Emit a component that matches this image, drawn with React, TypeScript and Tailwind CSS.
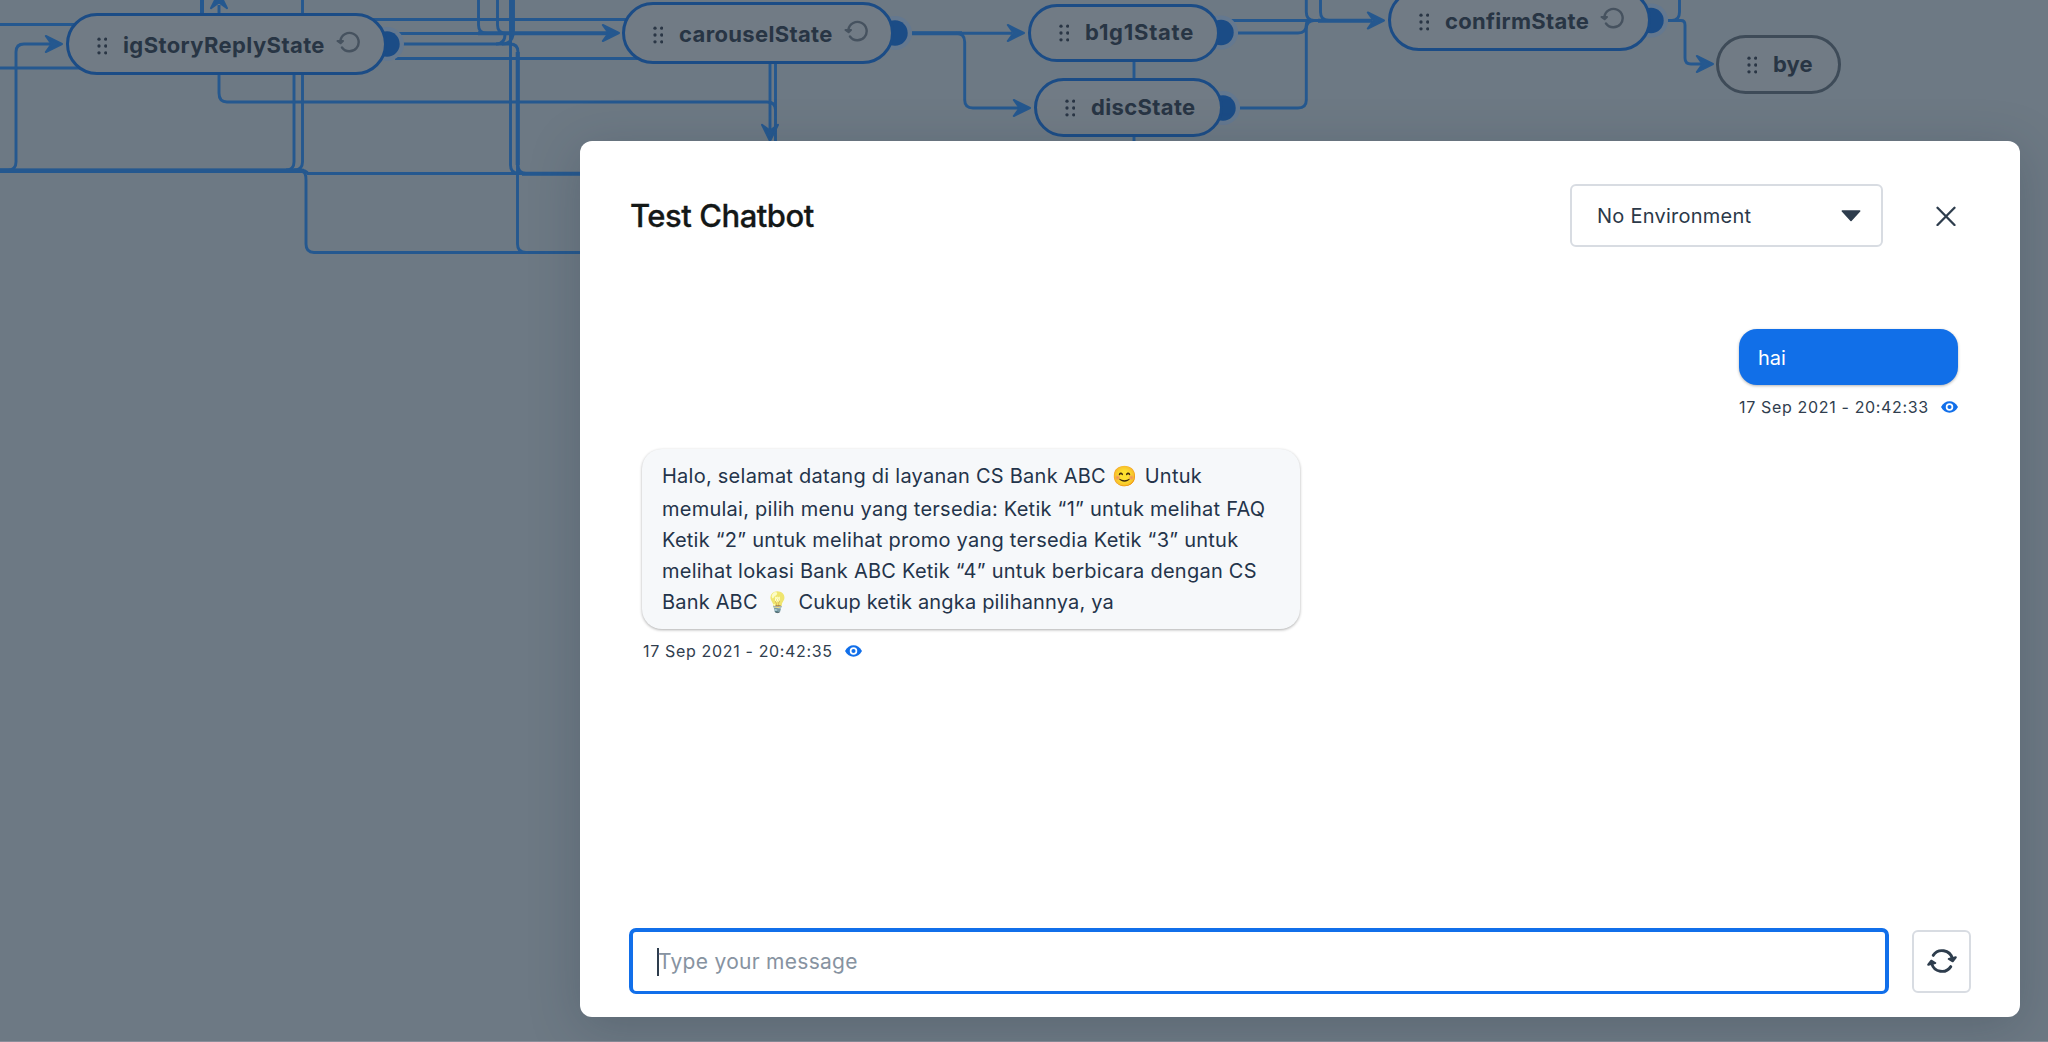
import type { ReactNode } from 'react';

const EDGES = [
  'M0 24.5H80',
  'M0 68H90',
  'M0 170H8Q16 170 16 162V52Q16 44 24 44H52',
  'M0 171.5H302Q306 171.5 306 180V244Q306 252.5 314 252.5H590',
  'M0 170H298Q306 170 308 173.5H590',
  'M219 5V93Q219 102 227 102H767Q775.5 102 775.5 110V150',
  'M302.5 0V162Q302.5 170 294 170',
  'M294 60V162Q294 170 286 170',
  'M370 19.5H640',
  'M395 33.5H608',
  'M403 44H510Q518 44 518 52V165Q518 173.5 526 173.5',
  'M395 58.5H650',
  'M478.5 0V25Q478.5 33.5 487 33.5',
  'M497.5 0V25Q497.5 33.5 506 33.5',
  'M496 44Q505 44 505 34',
  'M510.5 0V165Q510.5 173.5 519 173.5',
  'M502 44Q513.5 44 513.5 30V0',
  'M517.5 60V244Q517.5 252.5 526 252.5',
  'M770 50V130',
  'M775.5 50V110',
  'M912 33.3H1012',
  'M956 33.3Q964.7 33.3 964.7 42V100Q964.7 108 973 108H1020',
  'M1134 50V150',
  'M1225 20.5H1372',
  'M1238 33H1298Q1306.3 33 1306.3 25Q1306.3 20.5 1312 20.5',
  'M1240 108H1298Q1306.3 108 1306.3 100V29Q1306.3 20.5 1314 20.5',
  'M1306.3 0V12Q1306.3 20.5 1314 20.5',
  'M1320.5 0V12Q1320.5 20.5 1329 20.5',
  'M1668 20.5H1672Q1679.5 20.5 1679.5 12V0',
  'M1668 20.5H1681Q1685 20.5 1685 25V58Q1685 64 1691 64H1702',
];

const THICK_EDGES = [
  'M0 170.7H304',
  'M202 0V30',
  'M512 0V36',
  'M517.7 52V165',
  'M478 33.2H608',
  'M912 33.2H962',
  'M522 173.7H590',
  'M1318 20.7H1372',
];

const ARROWS: [number, number, number][] = [
  [63, 44, 0],
  [620, 33, 0],
  [1025, 33, 0],
  [1031, 108, 0],
  [1385, 20.5, 0],
  [1714, 64, 0],
  [219, -9, -90],
  [770, 142, 90],
];

const PORTS: [number, number][] = [
  [387, 44],
  [895, 33],
  [1221, 32.5],
  [1223, 108],
  [1651, 20.5],
];

function Edges() {
  return (
    <svg className="absolute inset-0" width="2048" height="1042" fill="none">
      <g stroke="#25588f" strokeWidth="2.9">
        {EDGES.map((d) => (
          <path key={d} d={d} />
        ))}
      </g>
      <g stroke="#25588f" strokeWidth="4">
        {THICK_EDGES.map((d) => (
          <path key={d} d={d} />
        ))}
      </g>
      {ARROWS.map(([x, y, r]) => (
        <path
          key={`${x}-${y}`}
          d="M-1 0L-17.2 -8L-11.5 0L-17.2 8Z"
          fill="#25588f"
          stroke="#25588f"
          strokeWidth="2"
          strokeLinejoin="round"
          transform={`translate(${x} ${y}) rotate(${r})`}
        />
      ))}
      {PORTS.map(([x, y]) => (
        <g key={`${x}-${y}`}>
          <circle cx={x} cy={y} r="17" fill="#64788f" />
          <circle cx={x} cy={y} r="12.7" fill="#1b4c86" />
        </g>
      ))}
    </svg>
  );
}

function Grip() {
  return (
    <svg width="10" height="18" viewBox="0 0 10 18" fill="#2a3645" className="shrink-0">
      {[2, 8.7].map((x) => [2.2, 9, 15.8].map((y) => <circle key={`${x}${y}`} cx={x} cy={y} r="1.65" />))}
    </svg>
  );
}

function Reload() {
  return (
    <svg width="24" height="22" viewBox="0 0 24 22" fill="none" className="shrink-0">
      <path d="M6 16.500A9.200 9.200 0 1 0 4.400 9.500" stroke="#46525f" strokeWidth="2.400" strokeLinecap="round" />
      <path d="M1.500 10L4.600 12.300L7 10Z" fill="#46525f" stroke="#46525f" strokeWidth="2" strokeLinecap="round" strokeLinejoin="round" />
    </svg>
  );
}

function Node({ place, label, loop = false, border = 'border-[#1b4c86]', text = 'tracking-[0.4px]' }: {
  place: string;
  label: string;
  loop?: boolean;
  border?: string;
  text?: string;
}) {
  return (
    <div className={`absolute flex items-center rounded-full border-[3px] bg-[#717b85] pl-[28px] ${border} ${place}`}>
      <span className={loop ? 'translate-y-[2px]' : ''}>
        <Grip />
      </span>
      <span className={`ml-[16px] whitespace-nowrap text-[22px] font-bold leading-[30px] text-[#283544] ${text} ${loop ? 'pt-[2px]' : 'pb-[2px]'}`}>
        {label}
      </span>
      {loop && (
        <span className="ml-[11px] -translate-y-[2px]">
          <Reload />
        </span>
      )}
    </div>
  );
}

function Eye() {
  return (
    <svg width="17" height="12" viewBox="0 0 17 12" className="shrink-0">
      <path d="M0 6C2 2.300 5 .3 8.500 .3S15 2.300 17 6C15 9.700 12 11.700 8.500 11.700S2 9.700 0 6Z" fill="#116fea" />
      <circle cx="8.500" cy="6" r="2.900" fill="#116fea" stroke="#fff" strokeWidth="1.700" />
    </svg>
  );
}

function Stamp({ children }: { children: ReactNode }) {
  return (
    <div className="flex items-center gap-[12px] text-[16px] leading-[22px] tracking-[0.66px] text-[#303e4e]">
      <span className="whitespace-nowrap">{children}</span>
      <Eye />
    </div>
  );
}

export default function App() {
  return (
    <div className="relative h-[1042px] w-[2048px] overflow-hidden bg-[#6d7984] font-['Inter','Liberation_Sans',sans-serif]">
      <Edges />
      <Node place="left-[66px] top-[13px] h-[62px] w-[321px]" label="igStoryReplyState" loop />
      <Node place="left-[622px] top-[2px] h-[62px] w-[272px]" label="carouselState" loop text="tracking-[0.35px]" />
      <Node place="left-[1028px] top-[4px] h-[58px] w-[192px]" label="b1g1State" text="tracking-[0.75px]" />
      <Node place="left-[1034px] top-[78px] h-[59px] w-[189px]" label="discState" text="tracking-[0.35px]" />
      <Node place="left-[1388px] top-[-11px] h-[62px] w-[263px]" label="confirmState" loop text="tracking-[0.3px]" />
      <Node place="left-[1716px] top-[35px] h-[59px] w-[125px]" label="bye" border="border-[#3e4b58]" text="tracking-[0.1px]" />
      <div className="absolute inset-x-0 bottom-0 h-px bg-[#8b8e9b]" />

      <section className="absolute left-[580px] top-[141px] flex h-[876px] w-[1440px] flex-col rounded-[12px] bg-white pl-[49px] shadow-[0_10px_50px_rgba(35,50,65,0.25)]">
        <header className="mt-[43px] flex h-[63px] shrink-0 items-center">
          <h1 className="w-[941px] pl-[1px] text-[31px] font-medium leading-[40px] tracking-[-0.47px] text-[#141817] [-webkit-text-stroke:0.3px_#141817]">Test Chatbot</h1>
          <div className="flex h-[63px] w-[313px] items-center justify-between rounded-[6px] border-2 border-[#d8dce2] pl-[25px] pr-[20px]">
            <span className="text-[20px] leading-[28px] tracking-[0.24px] text-[#2b3949]">No Environment</span>
            <svg width="20" height="12" viewBox="0 0 20 12">
              <path d="M1.300 1H18.700L10 10.500Z" fill="#2e3d4d" stroke="#2e3d4d" strokeWidth="1.500" strokeLinejoin="round" />
            </svg>
          </div>
          <svg className="ml-[53px]" width="20" height="20" viewBox="0 0 20 20">
            <path d="M1.500 1.800L18.500 19M18.500 1.800L1.500 19" stroke="#2e3d4d" strokeWidth="2.300" strokeLinecap="round" />
          </svg>
        </header>

        <main className="mt-[82px] flex flex-1 flex-col pl-[13px] pr-[62px]">
          <div className="flex w-[219px] flex-col self-end">
            <div className="h-[56px] rounded-[18px] bg-[#116fe8] pl-[19px] pt-[15px] text-[20px] leading-[28px] text-white shadow-[0_1px_3px_rgba(0,0,0,0.3)]">hai</div>
            <div className="mt-[11px]">
              <Stamp>17 Sep 2021 - 20:42:33</Stamp>
            </div>
          </div>
          <div className="mt-[31px] h-[180px] w-[658px] rounded-[20px] bg-[#f6f8fa] pl-[20px] pt-[12px] text-[20px] leading-[31px] tracking-[0.25px] whitespace-nowrap text-[#24344a] shadow-[0_1px_3px_rgba(0,0,0,0.32)]">
            <p className="h-[33px]">
              Halo, selamat datang di layanan CS Bank ABC <span className="tracking-[2px]">😊</span> Untuk
            </p>
            <p className="h-[31px]">memulai, pilih menu yang tersedia: Ketik “1” untuk melihat FAQ</p>
            <p className="h-[31px]">Ketik “2” untuk melihat promo yang tersedia Ketik “3” untuk</p>
            <p className="h-[31px]">melihat lokasi Bank ABC Ketik “4” untuk berbicara dengan CS</p>
            <p className="tracking-[0.18px]">
              Bank ABC <span className="mx-[2px] inline-block brightness-110 saturate-50">💡</span> Cukup ketik angka pilihannya, ya
            </p>
          </div>
          <div className="mt-[11px] pl-[1px]">
            <Stamp>17 Sep 2021 - 20:42:35</Stamp>
          </div>
        </main>

        <footer className="mb-[23px] flex shrink-0 items-center gap-[23px]">
          <div className="flex h-[66px] w-[1260px] items-center rounded-[7px] border-4 border-b-[3px] border-[#116fea] pl-[24px]">
            <span className="h-[28px] w-[2px] bg-[#2e3d4d]" />
            <span className="-ml-px pt-[1px] text-[21px] leading-[30px] tracking-[0.28px] text-[#8793a1]">Type your message</span>
          </div>
          <div className="flex h-[63px] w-[59px] items-center justify-center rounded-[6px] border-2 border-[#d8dce2]">
            <svg width="30" height="26" viewBox="0 0 30 26" fill="none">
              <g stroke="#2e3d4d" strokeWidth="2.900" strokeLinecap="round" strokeLinejoin="round">
                <path d="M6.200 7.400A10.600 10.600 0 0 1 25.300 10.500" />
                <path d="M23.800 18.600A10.600 10.600 0 0 1 4.700 15.500" />
              </g>
              <g fill="#2e3d4d" stroke="#2e3d4d" strokeWidth="2" strokeLinejoin="round">
                <path d="M21.700 11L28.800 9.300L25.700 13.300Z" />
                <path d="M8.300 15L1.200 16.700L4.300 12.700Z" />
              </g>
            </svg>
          </div>
        </footer>
      </section>
    </div>
  );
}
